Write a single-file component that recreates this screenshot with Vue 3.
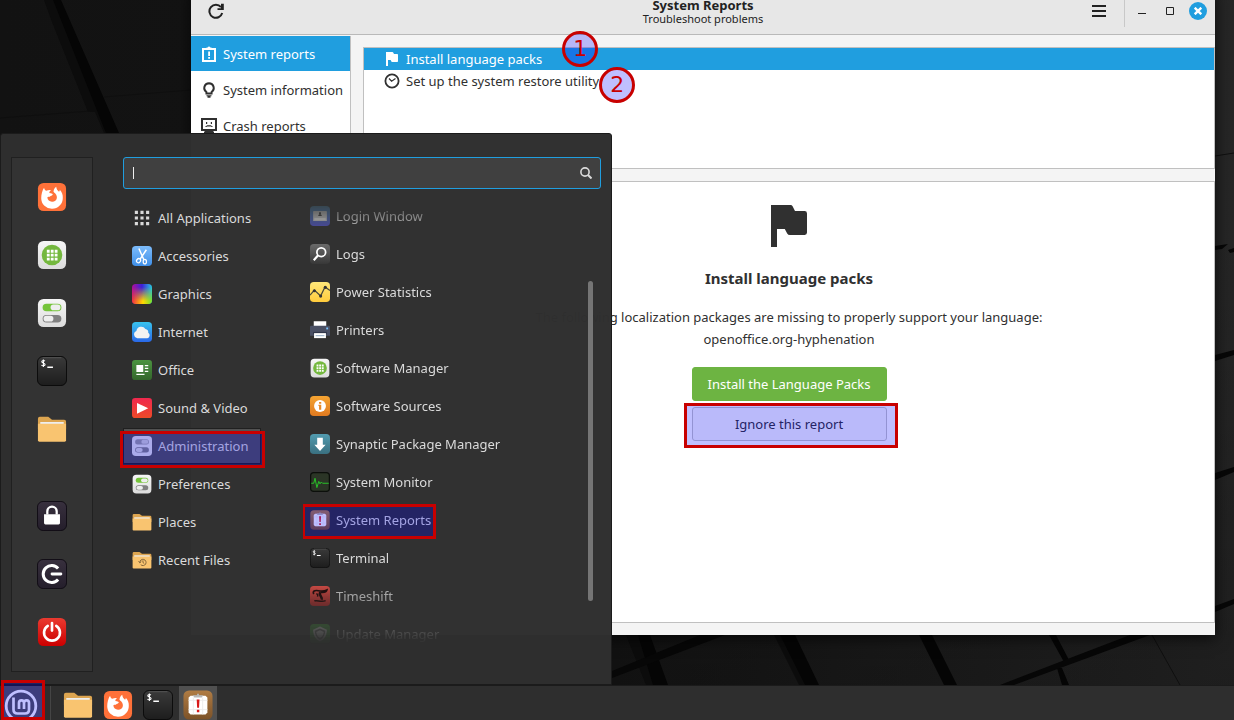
<script setup>
import { ref } from 'vue'

const search = ref('')

const views = [
  { icon: 'report', label: 'System reports', active: true },
  { icon: 'bulb', label: 'System information' },
  { icon: 'crash', label: 'Crash reports' }
]

const reports = [
  { icon: 'flag', label: 'Install language packs', active: true, step: 1 },
  { icon: 'clock', label: 'Set up the system restore utility', step: 2 }
]

const favourites = [
  { icon: 'firefox', label: 'Firefox' },
  { icon: 'software', label: 'Software Manager' },
  { icon: 'settings', label: 'System Settings' },
  { icon: 'terminal', label: 'Terminal' },
  { icon: 'folder', label: 'Files' }
]

const session = [
  { icon: 'lock', label: 'Lock Screen' },
  { icon: 'logout', label: 'Log Out' },
  { icon: 'power', label: 'Shut Down' }
]

const categories = [
  { icon: 'grid', label: 'All Applications' },
  { icon: 'scissors', label: 'Accessories' },
  { icon: 'graphics', label: 'Graphics' },
  { icon: 'cloud', label: 'Internet' },
  { icon: 'office', label: 'Office' },
  { icon: 'play', label: 'Sound & Video' },
  { icon: 'admin', label: 'Administration', active: true },
  { icon: 'settings', label: 'Preferences' },
  { icon: 'folder', label: 'Places' },
  { icon: 'recent', label: 'Recent Files' }
]

const apps = [
  { icon: 'login', label: 'Login Window' },
  { icon: 'logs', label: 'Logs' },
  { icon: 'stats', label: 'Power Statistics' },
  { icon: 'printer', label: 'Printers' },
  { icon: 'software', label: 'Software Manager' },
  { icon: 'sources', label: 'Software Sources' },
  { icon: 'synaptic', label: 'Synaptic Package Manager' },
  { icon: 'monitor', label: 'System Monitor' },
  { icon: 'sysreport', label: 'System Reports', marked: true },
  { icon: 'terminal', label: 'Terminal' },
  { icon: 'timeshift', label: 'Timeshift' },
  { icon: 'update', label: 'Update Manager' }
]

const tasks = [
  { icon: 'folder', label: 'Files' },
  { icon: 'firefox', label: 'Firefox' },
  { icon: 'terminal', label: 'Terminal' },
  { icon: 'sysreport', label: 'System Reports', active: true }
]
</script>

<template>
  <div class="desktop">
    <svg class="sprite" aria-hidden="true">
      <defs>
        <linearGradient id="g-light" x2="0" y2="1"><stop stop-color="#f6f6f6" /><stop offset="1" stop-color="#dcdcdc" /></linearGradient>
        <linearGradient id="g-dark" x2="0" y2="1"><stop stop-color="#3a3a3a" /><stop offset="1" stop-color="#1d1d1d" /></linearGradient>
        <linearGradient id="g-night" x2="0" y2="1"><stop stop-color="#38303e" /><stop offset="1" stop-color="#241e2b" /></linearGradient>
        <linearGradient id="g-red" x2="0" y2="1"><stop stop-color="#ea3a30" /><stop offset="1" stop-color="#cc0000" /></linearGradient>
        <linearGradient id="g-blue" x2="0" y2="1"><stop stop-color="#7dbcfb" /><stop offset="1" stop-color="#3f8fe8" /></linearGradient>
        <linearGradient id="g-sky" x2="0" y2="1"><stop stop-color="#38c4ee" /><stop offset="1" stop-color="#2a68e8" /></linearGradient>
        <linearGradient id="g-green" x2="0" y2="1"><stop stop-color="#4b9440" /><stop offset="1" stop-color="#34662c" /></linearGradient>
        <linearGradient id="g-play" x2="0" y2="1"><stop stop-color="#f0284e" /><stop offset="1" stop-color="#ee4a28" /></linearGradient>
        <linearGradient id="g-yellow" x2="0" y2="1"><stop stop-color="#ffe87a" /><stop offset="1" stop-color="#ffcb3c" /></linearGradient>
        <linearGradient id="g-orange" x2="0" y2="1"><stop stop-color="#f5a432" /><stop offset="1" stop-color="#e07a20" /></linearGradient>
        <linearGradient id="g-teal" x2="0" y2="1"><stop stop-color="#529cb0" /><stop offset="1" stop-color="#3a7080" /></linearGradient>
        <linearGradient id="g-login" x2="0" y2="1"><stop stop-color="#4c8eb8" /><stop offset="1" stop-color="#5050b8" /></linearGradient>
        <linearGradient id="g-logs" x2="0" y2="1"><stop stop-color="#6a6a6a" /><stop offset="1" stop-color="#383838" /></linearGradient>
        <linearGradient id="g-brown" x2="0" y2="1"><stop stop-color="#b07c44" /><stop offset="1" stop-color="#7c5228" /></linearGradient>
        <linearGradient id="g-shift" x2="0" y2="1"><stop stop-color="#ea5048" /><stop offset="1" stop-color="#a02828" /></linearGradient>
        <linearGradient id="g-hue" x2="1" y2="0"><stop stop-color="#b0109c" /><stop offset=".5" stop-color="#3c20d8" /><stop offset="1" stop-color="#28c8e0" /></linearGradient>
        <linearGradient id="g-hue2" x2="1" y2="0"><stop stop-color="#f03040" /><stop offset=".55" stop-color="#ffd800" /><stop offset="1" stop-color="#70e030" /></linearGradient>
        <linearGradient id="g-fade" x2="0" y2="1"><stop offset=".15" stop-color="#000" /><stop offset=".85" stop-color="#fff" /></linearGradient>
        <mask id="m-fade"><rect width="32" height="32" fill="url(#g-fade)" /></mask>
      </defs>

      <symbol id="i-firefox" viewBox="0 0 32 32">
        <rect x="1" y="1" width="30" height="30" rx="6" fill="#ff7139" />
        <path fill="#fff" d="M7.500 6C8 8 9 9 10 9.400C11.500 8.600 13 8.300 15 8.600C13.600 9.600 13 10.600 13.300 11.800L18 12C17 9.500 18.200 6.500 20.500 5C20.600 7.500 22 9 23.500 10.500C24.200 9.800 24.400 9 24.300 8.300C26.600 10.600 27.700 13.600 27.500 17A11.500 11.500 0 0 1 4.500 17.200C4.500 13.200 5.500 9 7.500 6Z" />
        <path fill="#ff7139" d="M13.300 11.800C14.400 11.900 15.600 12.200 16.800 12.700C16.900 13.800 15.800 14.300 14.500 15C13.800 15.400 14 16 13 15.800C12 15.600 11.400 15.700 11 16.600A5.200 5.200 0 0 0 21.200 17C21.400 14.600 20.400 12.400 17.500 10.600C16.300 10.400 14.600 10.800 13.300 11.800Z" />
      </symbol>
      <symbol id="i-software" viewBox="0 0 32 32">
        <rect x="1" y="1" width="30" height="30" rx="6" fill="url(#g-light)" />
        <circle cx="16" cy="16" r="11" fill="#74b83e" />
        <path fill="#fff" d="M10.500 10.500h3v3h-3zM14.700 10.500h3v3h-3zM18.900 10.500h3v3h-3zM10.500 14.700h3v3h-3zM14.700 14.700h3v3h-3zM18.900 14.700h3v3h-3zM10.500 18.900h3v3h-3zM14.700 18.900h3v3h-3zM18.900 18.900h3v3h-3z" />
      </symbol>
      <symbol id="i-settings" viewBox="0 0 32 32">
        <rect x="1" y="1" width="30" height="30" rx="6" fill="url(#g-light)" />
        <rect x="6" y="6" width="20" height="8" rx="4" fill="#75c43a" />
        <rect x="14.500" y="7" width="10.500" height="6" rx="3" fill="#eee" />
        <rect x="6" y="18" width="20" height="8" rx="4" fill="#808080" />
        <rect x="7" y="19" width="10.500" height="6" rx="3" fill="#eee" />
      </symbol>
      <symbol id="i-admin" viewBox="0 0 32 32">
        <rect x="0" y="0" width="32" height="32" rx="6" fill="#e4e4e4" />
        <rect x="5" y="5" width="22" height="8.500" rx="4" fill="#9a9a9a" />
        <rect x="15" y="6" width="11" height="6.500" rx="3" fill="#d0d0d0" />
        <rect x="5" y="18" width="22" height="8.500" rx="4" fill="#808080" />
        <rect x="6" y="19" width="11" height="6.500" rx="3" fill="#d8d8d8" />
      </symbol>
      <symbol id="i-terminal" viewBox="0 0 32 32">
        <rect x=".5" y=".5" width="31" height="31" rx="6" fill="url(#g-dark)" stroke="#0a0a0a" />
        <path d="M6 1.800h20" stroke="#555" />
        <path d="M8.400 5.400C7.600 4.400 5 4.700 5.100 6.200C5.200 7.700 8.600 7.200 8.600 9.100C8.600 10.700 5.600 10.800 4.800 9.600M6.800 3.600v8.200" fill="none" stroke="#fff" stroke-width="1.200" />
        <path d="M11 12h6" stroke="#fff" stroke-width="1.600" />
      </symbol>
      <symbol id="i-folder" viewBox="0 0 32 32">
        <path d="M1 5Q1 3 3 3H12L16 6H29Q31 6 31 8V16H1Z" fill="#dda550" />
        <path d="M3.500 8.500h25v4h-25z" fill="#eee" />
        <path d="M1 10.500H31V28Q31 29.500 29.500 29.500H2.500Q1 29.500 1 28Z" fill="#f9c470" />
      </symbol>
      <symbol id="i-recent" viewBox="0 0 32 32">
        <path d="M1 5Q1 3 3 3H12L16 6H29Q31 6 31 8V16H1Z" fill="#dda550" />
        <path d="M3.500 8.500h25v4h-25z" fill="#eee" />
        <path d="M1 10.500H31V28Q31 29.500 29.500 29.500H2.500Q1 29.500 1 28Z" fill="#f9c470" />
        <path d="M12.500 20a5 5 0 1 1 1.500 3.500M10.500 18l2 2.500 2.300-2M17.500 16.500v3.500l2 1.500" fill="none" stroke="#7c6038" stroke-width="1.500" />
      </symbol>
      <symbol id="i-lock" viewBox="0 0 32 32">
        <rect x=".5" y=".5" width="31" height="31" rx="6" fill="url(#g-night)" stroke="#100c14" />
        <path d="M7.500 14h17v9.500q0 1.500-1.500 1.500H9q-1.500 0-1.500-1.500z" fill="#fff" />
        <path d="M11 14.500V11a5 5 0 0 1 10 0v3.500" fill="none" stroke="#fff" stroke-width="2.400" />
      </symbol>
      <symbol id="i-logout" viewBox="0 0 32 32">
        <rect x=".5" y=".5" width="31" height="31" rx="6" fill="url(#g-night)" stroke="#100c14" />
        <path d="M22.500 10.200A9 9 0 1 0 22.500 21.800" fill="none" stroke="#fff" stroke-width="3.200" />
        <path d="M16 16H25.500" stroke="#fff" stroke-width="3" stroke-linecap="round" />
      </symbol>
      <symbol id="i-power" viewBox="0 0 32 32">
        <rect x="1" y="1" width="30" height="30" rx="6" fill="url(#g-red)" />
        <path d="M11.500 9.500A8.500 8.500 0 1 0 20.500 9.500" fill="none" stroke="#fff" stroke-width="2.800" stroke-linecap="round" />
        <path d="M16 6.500v8" stroke="#fff" stroke-width="2.800" stroke-linecap="round" />
      </symbol>
      <symbol id="i-grid" viewBox="0 0 32 32">
        <path fill="#dadada" d="M4.500 4.500h5v5h-5zM13.500 4.500h5v5h-5zM22.500 4.500h5v5h-5zM4.500 13.500h5v5h-5zM13.500 13.500h5v5h-5zM22.500 13.500h5v5h-5zM4.500 22.500h5v5h-5zM13.500 22.500h5v5h-5zM22.500 22.500h5v5h-5z" />
      </symbol>
      <symbol id="i-scissors" viewBox="0 0 32 32">
        <rect width="32" height="32" rx="6" fill="url(#g-blue)" />
        <path d="M11 4L19 22M23 6L13 21" stroke="#fff" stroke-width="2.400" />
        <ellipse cx="10.500" cy="23.500" rx="3" ry="3.500" fill="none" stroke="#fff" stroke-width="2" transform="rotate(40 10.500 23.500)" />
        <ellipse cx="20.500" cy="25" rx="2.600" ry="3.500" fill="none" stroke="#fff" stroke-width="2" />
      </symbol>
      <symbol id="i-graphics" viewBox="0 0 32 32">
        <rect width="32" height="32" rx="6" fill="url(#g-hue)" />
        <rect width="32" height="32" rx="6" fill="url(#g-hue2)" mask="url(#m-fade)" />
      </symbol>
      <symbol id="i-cloud" viewBox="0 0 32 32">
        <rect width="32" height="32" rx="6" fill="url(#g-sky)" />
        <path d="M8.500 26a6 6 0 0 1-1.500-11.500A8 8 0 0 1 21.500 11a5.500 5.500 0 0 1 4.500 6A5 5 0 0 1 24.500 26Z" fill="#f2f2f2" />
      </symbol>
      <symbol id="i-office" viewBox="0 0 32 32">
        <rect width="32" height="32" rx="5" fill="url(#g-green)" />
        <path d="M7 8h11v11H7zM20.500 8H26v2h-5.500zM20.500 12.500H26v2h-5.500zM20.500 17H26v2h-5.500zM7 22h13v2H7z" fill="#fff" />
      </symbol>
      <symbol id="i-play" viewBox="0 0 32 32">
        <rect width="32" height="32" rx="5" fill="url(#g-play)" />
        <path d="M8 8L26 16.500L8 25Z" fill="#fff" />
      </symbol>
      <symbol id="i-login" viewBox="0 0 32 32">
        <rect width="32" height="32" rx="6" fill="url(#g-login)" />
        <rect x="5" y="8" width="22" height="16" rx="1" fill="#ccc" />
        <path d="M7 19.500h18v2.500H7z" fill="#eee" />
        <path d="M13 16q0-3 3-3t3 3zM14.500 10h3v3h-3z" fill="#444" />
      </symbol>
      <symbol id="i-logs" viewBox="0 0 32 32">
        <rect width="32" height="32" rx="6" fill="url(#g-logs)" />
        <circle cx="18" cy="13" r="7" fill="none" stroke="#fff" stroke-width="2.800" />
        <path d="M13 18L6 26" stroke="#fff" stroke-width="3.400" />
      </symbol>
      <symbol id="i-stats" viewBox="0 0 32 32">
        <rect width="32" height="32" rx="6" fill="url(#g-yellow)" />
        <path d="M0 21L7 13L17 22.500L24 8L32 13.500" fill="none" stroke="#4a4a3a" stroke-width="2" />
        <g fill="#333"><circle cx="7" cy="14" r="2.500" /><circle cx="17" cy="22.500" r="2.500" /><circle cx="24.500" cy="8.500" r="2.500" /></g>
      </symbol>
      <symbol id="i-printer" viewBox="0 0 32 32">
        <path d="M6 2h20v9H6z" fill="#fff" />
        <path d="M0 11q0-2 2-2h28q2 0 2 2v14H0z" fill="#4a5064" />
        <path d="M26 12h3v3h-3z" fill="#7cc4ff" />
        <path d="M5 19h22v4H5z" fill="#30364a" />
        <path d="M6.500 21h19v8h-19z" fill="#fff" />
        <path d="M9 24h14v2H9z" fill="#a8bcd0" />
      </symbol>
      <symbol id="i-sources" viewBox="0 0 32 32">
        <rect width="32" height="32" rx="6" fill="url(#g-orange)" />
        <circle cx="16" cy="16" r="9.500" fill="#fff" />
        <path d="M14.500 9.500h3.500v3h-3.500zM13.500 14H18v8h-3.500v-6h-1z" fill="#e88a28" />
      </symbol>
      <symbol id="i-synaptic" viewBox="0 0 32 32">
        <rect width="32" height="32" rx="6" fill="url(#g-teal)" />
        <path d="M11.500 6h9v11H25L16 27L7 17h4.500z" fill="#fff" />
      </symbol>
      <symbol id="i-monitor" viewBox="0 0 32 32">
        <rect x="1" y="1" width="30" height="30" rx="5" fill="#2b3526" stroke="#0c0f0b" stroke-width="2" />
        <path d="M2 18h4l2-8 3 15 3-10 2 4 2-3 2 2h10" fill="none" stroke="#28c028" stroke-width="1.600" />
      </symbol>
      <symbol id="i-sysreport" viewBox="0 0 32 32">
        <rect x=".5" y=".5" width="31" height="31" rx="6" fill="url(#g-brown)" />
        <path d="M8 6h16l2 2v16l-2 2H8l-2-2V8z" fill="#fff" />
        <path d="M11 8v18M21 8v18M6 11h20M6 21h20" stroke="#ececec" />
        <path d="M15 4h2v1.500h4.500l-1.500 2.500h-8l-1.500-2.500H15z" fill="#b8b8b8" />
        <path d="M14.600 10h3l-.5 9h-2zM14.800 21h2.600v2.800h-2.600z" fill="#d81818" />
      </symbol>
      <symbol id="i-timeshift" viewBox="0 0 32 32">
        <rect width="32" height="32" rx="6" fill="url(#g-shift)" />
        <path d="M6 13C3.500 8 8 6.500 13 7.500S23 8.500 27 6.500C26 10.500 21 10.500 17 10" fill="none" stroke="#1c0404" stroke-width="2.600" />
        <path d="M17 10C12 14 21 17 18.500 22" fill="none" stroke="#1c0404" stroke-width="4" />
        <path d="M10 13C12 12.500 13 14 12 17M7 24C11 21.500 17 27 25 23.500" fill="none" stroke="#1c0404" stroke-width="2.400" />
      </symbol>
      <symbol id="i-update" viewBox="0 0 32 32">
        <rect width="32" height="32" rx="6" fill="#3f8a38" />
        <path d="M16 4L27 9C27 17 24 24 16 28C8 24 5 17 5 9Z" fill="#ccc" />
        <path d="M16 7L24.500 10.800C24.300 17 21.500 22.500 16 25.500C10.500 22.500 7.700 17 7.500 10.800Z" fill="#666" />
        <path d="M16 10L22 12.700C21.500 17.500 19.500 20.500 16 22.500C12.500 20.500 10.500 17.500 10 12.700Z" fill="#ccc" />
      </symbol>

      <symbol id="i-report" viewBox="0 0 16 16">
        <path d="M2 3h12v12H2z" fill="none" stroke="currentColor" stroke-width="2" />
        <path d="M5.500 1.500h1.200a1.400 1.400 0 0 1 2.600 0h1.200V4h-5z" fill="currentColor" />
        <path d="M7.200 5.500h1.800v4.500H7.200zM7.200 11h1.800v1.800H7.200z" fill="currentColor" />
      </symbol>
      <symbol id="i-bulb" viewBox="0 0 16 16">
        <path d="M8 1.200a4.800 4.800 0 0 0-2.600 8.800V11.500h5.200V10A4.800 4.800 0 0 0 8 1.200Z" fill="none" stroke="currentColor" stroke-width="1.900" />
        <path d="M5.500 13.300h5v1h-1v1.400h-3v-1.400h-1z" fill="currentColor" />
      </symbol>
      <symbol id="i-crash" viewBox="0 0 16 16">
        <path d="M1 1h14v11H1z" fill="none" stroke="currentColor" stroke-width="2" />
        <path d="M5 4h1.200v2H5zM9.800 4H11v2H9.800zM4.500 9v-1h1.200v-.8h4.600V8h1.200v1h-1.200v-.6H5.700V9zM4 12h8v1.500h1V15H3v-1.500h1z" fill="currentColor" />
      </symbol>
      <symbol id="i-flag" viewBox="0 0 16 16">
        <path d="M2 1H8.500Q9 1 9.200 1.400L10 3H13.200Q14 3 14 3.800V10.200Q14 11 13.200 11H8.300Q7.700 11 7.400 10.500L6.600 9H4V15H2Z" fill="currentColor" />
      </symbol>
      <symbol id="i-clock" viewBox="0 0 16 16">
        <circle cx="8" cy="8" r="6.600" fill="none" stroke="currentColor" stroke-width="1.800" />
        <path d="M5 5.500L7.600 8.200L11.500 5.500" fill="none" stroke="currentColor" stroke-width="1.200" />
      </symbol>
      <symbol id="i-reload" viewBox="0 0 16 16">
        <path d="M13 4.200A6.500 6.500 0 1 0 14.200 10" fill="none" stroke="currentColor" stroke-width="2" />
        <path d="M15.800 .8V7H9.500V5.200H13V.8Z" fill="currentColor" />
      </symbol>
      <symbol id="i-mint" viewBox="0 0 34 34">
        <circle cx="17" cy="17" r="14.800" fill="none" stroke="currentColor" stroke-width="2.800" />
        <path d="M9.500 8.500V20.500Q9.500 24.500 13.500 24.500H21Q25 24.500 25 20.500V14Q25 11.300 22.600 11.300T20 14V20M20 14Q20 11.300 17.500 11.300T15 14V20" fill="none" stroke="currentColor" stroke-width="2.700" />
      </symbol>
    </svg>

    <svg class="wallpaper" viewBox="0 0 1234 720" preserveAspectRatio="xMidYMid slice" aria-hidden="true">
      <defs>
        <linearGradient id="g-wall" x2="1" y2="0"><stop offset="0" stop-color="#121212" /><stop offset=".5" stop-color="#151515" /><stop offset="1" stop-color="#262626" /></linearGradient>
        <linearGradient id="g-dusk" x2="0" y2="1"><stop offset=".3" stop-color="#000" stop-opacity="0" /><stop offset="1" stop-color="#000" stop-opacity=".22" /></linearGradient>
      </defs>
      <rect width="1234" height="720" fill="url(#g-wall)" />
      <rect width="1234" height="720" fill="url(#g-dusk)" />
      <path fill="#0c0c0c" d="M44 0H55L102 112H88L52 22ZM95 112H108L118 133H104ZM626 635H640L660 685H646ZM774 635H780L808 685H799Z" />
      <path fill="#050505" d="M53 0H61L119 133H106ZM638 635H650L668 685H653ZM780 635H795L819 685H805ZM919 635H932L957 685H944ZM1049 635H1056L1069 660L1064 662ZM1057 668H1062L1069 685H1062Z" />
      <path fill="#070707" d="M612 671L700 635H725L612 678ZM1000 685L1130 635H1150L1014 685ZM1215 606L1234 599V604L1215 612ZM1215 355L1234 350V355L1215 361ZM1215 473L1234 467V472L1215 480ZM1215 246L1228 244L1222 249L1215 250ZM1228 250L1234 248V252L1230 253Z" />
      <path fill="none" stroke="#0f0f0f" d="M1152 635L1180 685M1215 156L1234 153M0 118L90 111M104 97L191 90" />
    </svg>

    <section class="window">
      <header class="titlebar">
        <div class="bar-start">
          <button class="bar-button" aria-label="Refresh"><svg class="i16"><use href="#i-reload" /></svg></button>
        </div>
        <div class="titles">
          <h1>System Reports</h1>
          <p>Troubleshoot problems</p>
        </div>
        <div class="bar-end">
          <button class="bar-button burger" aria-label="Menu"><svg width="14" height="14"><path d="M0 2h14M0 7h14M0 12h14" stroke="currentColor" stroke-width="2" /></svg></button>
          <i class="bar-line"></i>
          <button class="bar-button" aria-label="Minimize"><svg width="8" height="8"><path d="M0 6.500h8" stroke="currentColor" /></svg></button>
          <button class="bar-button" aria-label="Maximize"><svg width="8" height="8"><path d="M.5 .5h7v7h-7z" fill="none" stroke="currentColor" /></svg></button>
          <button class="bar-button close" aria-label="Close"><svg width="8" height="8"><path d="M.7 .7L7.300 7.300M7.300 .7L.7 7.300" stroke="currentColor" stroke-width="2.400" /></svg></button>
        </div>
      </header>
      <div class="window-body">
        <nav class="views">
          <button v-for="v in views" :key="v.label" class="view" :class="{ active: v.active }">
            <svg class="i16"><use :href="'#i-' + v.icon" /></svg>{{ v.label }}
          </button>
        </nav>
        <main class="content">
          <ul class="frame reports">
            <li v-for="r in reports" :key="r.label" class="report" :class="{ active: r.active }">
              <svg class="i16"><use :href="'#i-' + r.icon" /></svg>
              <span>{{ r.label }}</span>
              <b class="step" :class="'step-' + r.step">{{ r.step }}</b>
            </li>
          </ul>
          <article class="frame detail">
            <svg class="i48"><use href="#i-flag" /></svg>
            <h2>Install language packs</h2>
            <p>The following localization packages are missing to properly support your language:<br>openoffice.org-hyphenation</p>
            <div class="actions">
              <button class="action primary">Install the Language Packs</button>
              <button class="action">Ignore this report<i class="mark mark-ignore"></i></button>
            </div>
          </article>
        </main>
      </div>
    </section>

    <section class="menu">
      <aside class="side">
        <div class="side-group">
          <button v-for="f in favourites" :key="f.label" class="launcher" :aria-label="f.label"><svg class="i30"><use :href="'#i-' + f.icon" /></svg></button>
        </div>
        <div class="side-group">
          <button v-for="s in session" :key="s.label" class="launcher" :aria-label="s.label"><svg class="i30"><use :href="'#i-' + s.icon" /></svg></button>
        </div>
      </aside>
      <div class="menu-main">
        <label class="search">
          <i class="caret"></i>
          <input v-model="search" type="text" aria-label="Search applications">
          <svg width="12" height="12" viewBox="0 0 12 12"><circle cx="5" cy="5" r="4.100" fill="none" stroke="currentColor" stroke-width="1.600" /><path d="M8 8L11.500 11.500" stroke="currentColor" stroke-width="2" /></svg>
        </label>
        <div class="lists">
          <div class="categories">
            <button v-for="c in categories" :key="c.label" class="entry" :class="{ active: c.active }">
              <svg class="i20"><use :href="'#i-' + c.icon" /></svg>{{ c.label }}
              <i v-if="c.active" class="mark mark-category"></i>
            </button>
          </div>
          <div class="apps">
            <button v-for="a in apps" :key="a.label" class="entry app">
              <svg class="i20"><use :href="'#i-' + a.icon" /></svg>{{ a.label }}
              <i v-if="a.marked" class="mark mark-app"></i>
            </button>
          </div>
          <div class="scroll"><i class="thumb"></i></div>
        </div>
      </div>
    </section>

    <footer class="panel">
      <button class="mint" aria-label="Menu"><svg class="i34"><use href="#i-mint" /></svg><i class="mark mark-mint"></i></button>
      <i class="panel-line"></i>
      <button v-for="t in tasks" :key="t.label" class="task" :class="{ active: t.active }" :aria-label="t.label"><svg class="i30"><use :href="'#i-' + t.icon" /></svg></button>
    </footer>
  </div>
</template>

<style>
body {
  margin: 0;
  background: #141414;
}
</style>

<style scoped>
.desktop {
  position: relative;
  height: 100vh;
  overflow: hidden;
  font-family: "Noto Sans", "Open Sans", sans-serif;
  font-size: 13px;
  line-height: 22px;
  color: #303030;
}
h1, h2, p, ul {
  margin: 0;
  padding: 0;
  list-style: none;
}
button {
  position: relative;
  display: flex;
  align-items: center;
  padding: 0;
  border: 0;
  background: none;
  font: inherit;
  color: inherit;
  white-space: nowrap;
}
svg {
  display: block;
  flex: none;
}
.sprite {
  position: absolute;
  width: 0;
  height: 0;
}
.wallpaper {
  position: absolute;
  width: 100%;
  height: 100%;
}
.i16 { width: 16px; height: 16px; }
.i20 { width: 20px; height: 20px; }
.i30 { width: 30px; height: 30px; }
.i34 { width: 34px; height: 34px; }
.i48 { width: 48px; height: 48px; }

.window {
  position: absolute;
  top: -12px;
  right: 19px;
  bottom: 85px;
  left: 191px;
  display: flex;
  flex-direction: column;
  background: #f4f4f4;
  box-shadow: 0 3px 14px rgba(0, 0, 0, .7);
}
.titlebar {
  display: grid;
  grid-template-columns: 1fr auto 1fr;
  align-items: center;
  height: 46px;
  border-bottom: 1px solid #b9b9b9;
  margin-bottom: 1px;
  background: #e7e7e7;
  color: #222;
}
.bar-start {
  display: flex;
  padding-left: 16px;
}
.titles {
  padding-top: 2px;
  text-align: center;
}
h1 {
  font-size: 13px;
  line-height: 14px;
}
.titles p {
  font-size: 11px;
  line-height: 14px;
}
.bar-end {
  display: flex;
  justify-content: flex-end;
  align-items: center;
  gap: 10px;
  padding-right: 8px;
}
.bar-button {
  justify-content: center;
  width: 18px;
  height: 18px;
}
.bar-line {
  width: 1px;
  height: 32px;
  margin: 0 -2px 0 6px;
  background: #c8c8c8;
}
.close {
  border-radius: 50%;
  background: #209edf;
  color: #fff;
}
.window-body {
  flex: 1;
  display: flex;
  min-height: 0;
}
.views {
  display: flex;
  flex-direction: column;
  gap: 1px;
  width: 159px;
  border-right: 1px solid #c0c0c0;
  background: #fff;
}
.view {
  gap: 6px;
  width: 100%;
  height: 35px;
  padding-left: 10px;
}
.view.active,
.report.active {
  background: #209edf;
  color: #fff;
}
.content {
  flex: 1;
  display: flex;
  flex-direction: column;
  gap: 12px;
  padding: 11px 0 12px 12px;
}
.frame {
  border: 1px solid #c0c0c0;
  background: #fff;
}
.reports {
  height: 120px;
}
.report {
  display: flex;
  align-items: center;
  gap: 6px;
  height: 22px;
  padding-left: 20px;
}
.step {
  position: relative;
  z-index: 1;
  box-sizing: border-box;
  width: 36px;
  height: 36px;
  border: 3px solid #c80000;
  border-radius: 50%;
  background: rgba(0, 0, 255, .25);
  font: 22px/30px "DejaVu Sans", sans-serif;
  text-align: center;
  color: #c80000;
}
.step-1 {
  margin: -20px 0 0 14px;
}
.step-2 {
  margin: 8px 0 0 -6px;
}
.detail {
  flex: 1;
  display: flex;
  flex-direction: column;
  align-items: center;
  padding-top: 20px;
}
h2 {
  margin-top: 16px;
  font-size: 15px;
  line-height: 24px;
}
.detail p {
  margin-top: 16px;
  text-align: center;
  white-space: nowrap;
}
.actions {
  display: grid;
  gap: 6px;
  margin-top: 17px;
}
.action {
  justify-content: center;
  min-width: 195px;
  height: 34px;
  padding: 0 15px;
  border: 1px solid #c4c4c4;
  border-radius: 3px;
  background: #f9f9f9;
}
.action.primary {
  border-color: #6db442;
  background: #6db442;
  color: #fff;
}
.mark {
  position: absolute;
  border: 3px solid #c80000;
  background: rgba(0, 0, 255, .25);
}
.mark-ignore { inset: -5px -12px -8px -9px; }
.mark-category { inset: 2px -5px -5px -4px; }
.mark-app { inset: 3px 2px 0 -1px; }
.mark-mint { inset: -6px 0 0 1px; }

.menu {
  position: absolute;
  top: 133px;
  bottom: 35px;
  left: 0;
  box-sizing: border-box;
  width: 612px;
  display: flex;
  gap: 30px;
  padding: 23px 10px 0;
  border: 1px solid #1b1b1b;
  border-radius: 3px 3px 0 0;
  background: rgba(47, 47, 47, .99);
  color: #dadada;
}
.side {
  box-sizing: border-box;
  width: 82px;
  display: flex;
  flex-direction: column;
  justify-content: space-between;
  align-items: center;
  margin-bottom: 12px;
  padding: 24px 0;
  border: 1px solid #202020;
  background: #333;
}
.side-group {
  display: grid;
  gap: 28px;
}
.menu-main {
  flex: 1;
  display: flex;
  flex-direction: column;
  min-width: 0;
}
.search {
  display: flex;
  align-items: center;
  height: 30px;
  padding: 0 8px;
  border: 1px solid #209edf;
  border-radius: 3px;
  background: #404040;
}
.search input {
  flex: 1;
  min-width: 0;
  border: 0;
  outline: 0;
  background: none;
  font: inherit;
  color: inherit;
}
.caret {
  width: 1px;
  height: 12px;
  margin-left: 1px;
  background: #eee;
}
.lists {
  flex: 1;
  display: flex;
  min-height: 0;
}
.categories {
  width: 138px;
  padding-top: 10px;
}
.entry {
  box-sizing: border-box;
  width: 100%;
  gap: 6px;
  height: 38px;
  padding: 0 9px;
}
.entry.active {
  height: 36px;
  margin: 1px 0;
  padding: 0 8px;
  border: 1px solid #202020;
  background: #525252;
}
.apps {
  flex: 1;
  margin: 8px 0 40px 42px;
  overflow: hidden;
  mask-image: linear-gradient(transparent, #000 40px, #000 375px, transparent);
}
.entry.app {
  width: auto;
  padding: 0 7px;
}
.scroll {
  width: 13px;
  padding-top: 92px;
}
.thumb {
  display: block;
  width: 5px;
  height: 320px;
  border-radius: 3px;
  background: #757575;
}

.panel {
  position: absolute;
  right: 0;
  bottom: 0;
  left: 0;
  display: flex;
  align-items: center;
  height: 34px;
  border-top: 1px solid #1b1b1b;
  background: #2e2e2e;
}
.mint {
  z-index: 0;
  justify-content: center;
  align-items: flex-start;
  box-sizing: border-box;
  width: 45px;
  height: 34px;
  padding: 3px 3px 0 0;
  color: #fff;
}
.mint::before {
  content: "";
  position: absolute;
  z-index: -1;
  inset: 0 3px 2px 4px;
  background: #525252;
}
.panel-line {
  width: 1px;
  height: 34px;
  margin: 0 7px 0 5px;
  background: #454545;
}
.task {
  justify-content: center;
  align-items: flex-start;
  box-sizing: border-box;
  width: 38px;
  height: 34px;
  margin: 0 1px;
  padding-top: 4px;
}
.task.active {
  background: #505050;
}
</style>
